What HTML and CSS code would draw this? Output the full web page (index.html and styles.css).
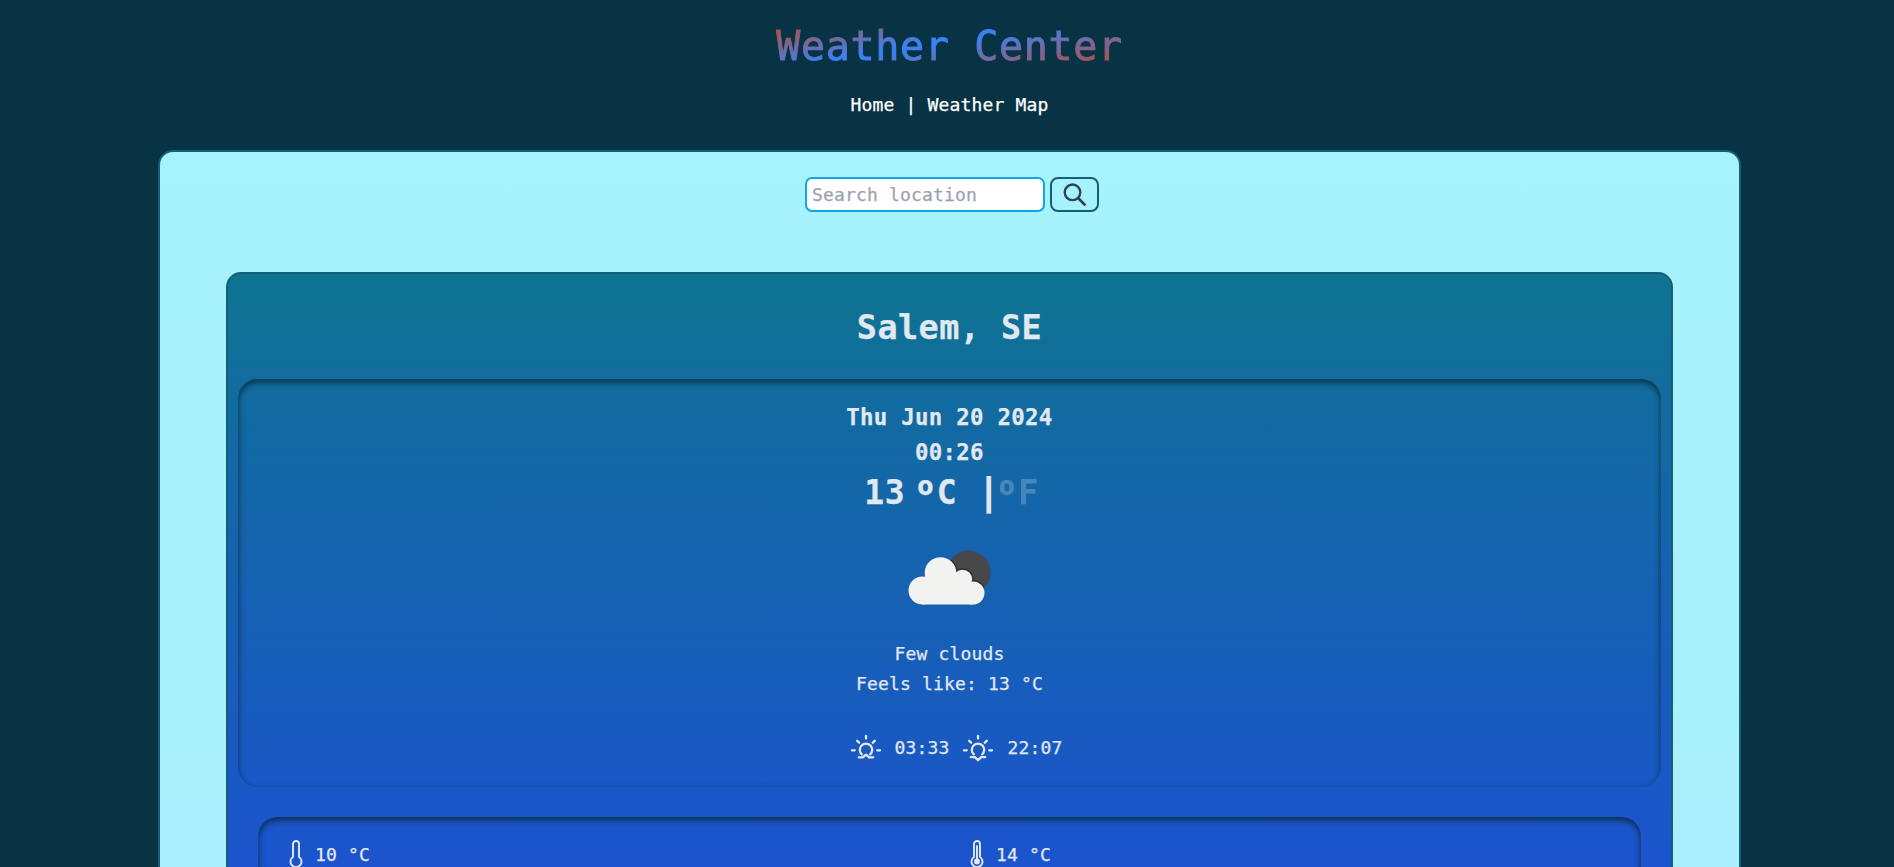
FILE: index.html
```html
<!DOCTYPE html>
<html lang="en">
<head>
<meta charset="utf-8">
<title>Weather Center</title>
<link rel="stylesheet" href="styles.css">
</head>
<body>
<header class="header">
  <h1 class="title">Weather Center</h1>
  <nav class="nav"><a>Home</a> | <a>Weather Map</a></nav>
</header>
<main class="panel">
  <form class="search">
    <input class="search-input" type="text" placeholder="Search location">
    <button class="search-button" type="button" aria-label="Search">
      <svg width="24" height="24" viewBox="0 0 24 24" fill="none" stroke="#334155" stroke-width="2.4"><circle cx="9.5" cy="9.3" r="7.800"/><path d="M15 15L22.400 22.400" stroke-width="2.700"/></svg>
    </button>
  </form>
  <article class="card">
    <h2 class="city">Salem, SE</h2>
    <section class="inset current">
      <p class="date">Thu Jun 20 2024</p>
      <p class="date">00:26</p>
      <div class="temp"><span>13</span><span class="unit"><span class="ordinal">º</span>C</span><span class="bar">|</span><span class="unit off"><span class="ordinal">º</span>F</span></div>
      <svg class="weather" width="100" height="100" viewBox="0 0 100 100">
        <defs>
          <clipPath id="moon"><circle cx="69.500" cy="43.500" r="22"/></clipPath>
          <g id="cloud"><circle cx="23.500" cy="61.500" r="14"/><circle cx="41.500" cy="44" r="15.800"/><circle cx="63.500" cy="50.300" r="9.600"/><circle cx="74" cy="64" r="11.500"/><path d="M23.500 60L41 40L64 50L74 62V75.500H23.500z"/></g>
        </defs>
        <circle cx="69.500" cy="43.500" r="22" fill="#48484a"/>
        <g clip-path="url(#moon)"><use href="#cloud" fill="#2e3035" stroke="#2e3035" stroke-width="3"/></g>
        <use href="#cloud" fill="#f2f2f0"/>
      </svg>
      <p>Few clouds</p>
      <p>Feels like: 13 °C</p>
      <div class="sun">
        <svg class="sun-icon" width="32" height="32" viewBox="0 0 32 32"><path d="M16 3.900v2.700M7.200 8.800L9.200 10.700M24.800 8.800L22.800 10.700M1.900 18.300h2.900M27.200 18.300h2.900M11.800 22.400a6.200 6.200 0 1 1 8.400 0M8.800 25.300h4L16 22.600l3.200 2.700h4"/></svg>
        <span>03:33</span>
        <svg class="sun-icon sunset" width="32" height="32" viewBox="0 0 32 32"><path d="M16 3.900v2.700M7.200 8.800L9.200 10.700M24.800 8.800L22.800 10.700M1.900 18.300h2.900M27.200 18.300h2.900M11.800 22.400a6.200 6.200 0 1 1 8.400 0M8.800 25.200h4L16 28.200l3.200-3h4"/></svg>
        <span>22:07</span>
      </div>
    </section>
    <section class="inset details">
      <div class="detail">
        <svg class="thermo" width="14" height="28" viewBox="0 0 14 28"><path d="M4 17V4a3 3 0 0 1 6 0v13a5.500 5.500 0 1 1-6 0z"/></svg>
        <span>10 °C</span>
      </div>
      <div class="detail">
        <svg class="thermo" width="14" height="28" viewBox="0 0 14 28"><path d="M4 17V4a3 3 0 0 1 6 0v13a5.500 5.500 0 1 1-6 0zM7 6v15"/><circle cx="7" cy="21.500" r="2" fill="#e2e8f0"/></svg>
        <span>14 °C</span>
      </div>
    </section>
  </article>
</main>
</body>
</html>
```

FILE: styles.css
```css
* { box-sizing: border-box; margin: 0; padding: 0; }
html { height: 100%; overflow: hidden; }
body {
  width: 1899px;
  height: 867px;
  overflow: hidden;
  background: #083344;
  color: #fff;
  font-family: "DejaVu Sans Mono", "Liberation Mono", monospace;
  font-size: 18px;
  letter-spacing: 0.163px;
  line-height: 30px;
  -webkit-text-stroke-width: 0.25px;
}
.header { height: 150px; padding-top: 16px; text-align: center; }
.title {
  width: 350px;
  height: 60px;
  margin: 0 auto;
  font-size: 40px;
  font-weight: 400;
  line-height: 61px;
  letter-spacing: 0.67px;
  white-space: nowrap;
  color: transparent;
  -webkit-text-stroke: 0.9px transparent;
  background: linear-gradient(169deg, #b0504a 11%, #3b82f6 43%, #3b82f6 46%, #b0504a 87%);
  -webkit-background-clip: text;
  background-clip: text;
}
.nav { margin-top: 14px; }
.panel {
  width: 1583px;
  height: 717px;
  margin: 0 auto;
  padding: 25px 66px 0;
  border: 2px solid #155e75;
  border-bottom: 0;
  border-radius: 15px 15px 0 0;
  background: linear-gradient(#a5f3fc, #aaeffd);
  overflow: hidden;
}
.search { display: flex; gap: 5px; height: 35px; padding-left: 579px; }
.search-input {
  width: 240px;
  height: 35px;
  padding: 0 5px;
  border: 2px solid #0ea5e9;
  border-radius: 7px;
  background: #fff;
  font: inherit;
  letter-spacing: inherit;
}
.search-input::placeholder { color: #9ca3af; }
.search-button {
  display: flex;
  align-items: center;
  justify-content: center;
  width: 49px;
  height: 35px;
  border: 2px solid #155e75;
  border-radius: 8px;
  background: transparent;
}
.card {
  height: 1200px;
  margin-top: 60px;
  padding: 0 10px;
  border: 2px solid #155e75;
  border-radius: 15px;
  background: linear-gradient(#0e7490, #126ba0 130px, #1d4ed8 700px);
  color: #e2e8f0;
}
.city { height: 105px; font-size: 33.400px; line-height: 108px; letter-spacing: 0.5px; text-align: center; }
.inset { border-radius: 20px; box-shadow: inset 0 3px 6px rgba(6, 38, 52, 0.85); }
.current { display: flex; flex-direction: column; align-items: center; height: 408px; padding-top: 21px; }
.date { height: 35px; font-size: 22.400px; font-weight: 700; line-height: 35px; letter-spacing: 0.27px; }
.temp {
  display: flex;
  height: 45px;
  padding-left: 4px;
  font-size: 33px;
  font-weight: 700;
  line-height: 45px;
  letter-spacing: 0.640px;
}
.unit { display: flex; margin-left: 11px; }
.ordinal {
  width: 20.500px;
  margin-left: -1px;
  margin-right: 1px;
  font-family: "Open Sans", sans-serif;
  font-size: 42px;
  letter-spacing: 0;
  line-height: 48px;
  text-align: center;
}
.bar { margin-left: 20px; font-size: 38px; letter-spacing: -2.400px; line-height: 42px; }
.off { margin-left: 0; opacity: 0.25; }
.weather { margin: 14px 1px 10px 0; }
.sun { display: flex; align-items: center; gap: 13px; height: 32px; margin-top: 33px; padding-left: 13px; }
.sun-icon, .thermo { flex: none; fill: none; stroke: #e2e8f0; stroke-width: 2.300; stroke-linecap: round; stroke-linejoin: round; }
.sunset { margin: 0 1px 0 -1px; }
.details { display: flex; height: 500px; margin: 30px 20px 0; padding: 23px 31px; }
.detail { display: flex; flex: none; gap: 12px; width: 681px; height: 30px; }
.thermo { stroke-width: 1.900; }
```
